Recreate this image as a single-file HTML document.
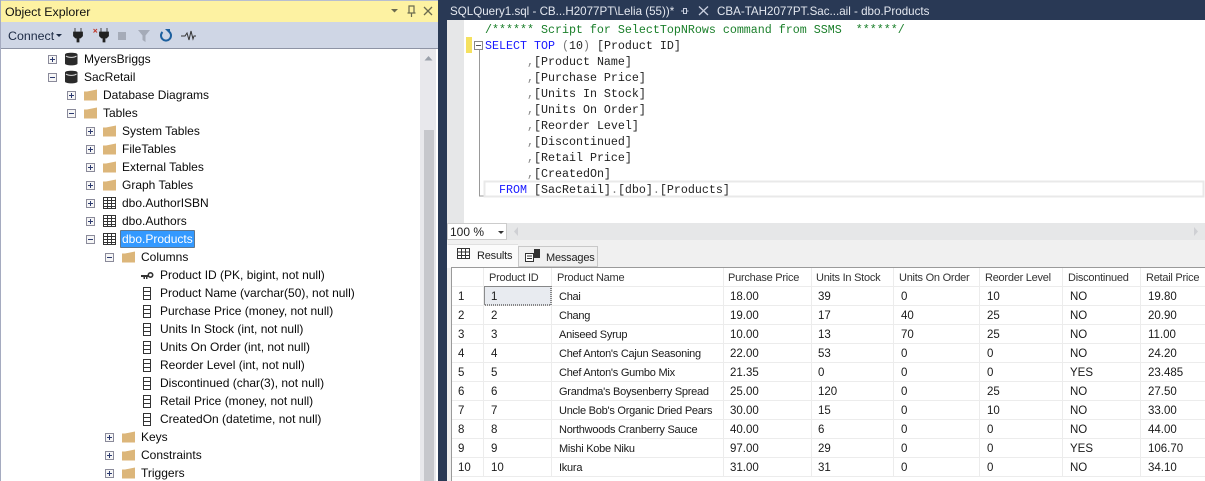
<!DOCTYPE html>
<html><head><meta charset="utf-8"><style>
html,body{margin:0;padding:0;background:#fff;width:1205px;height:481px;overflow:hidden}
svg{display:block}
text{font-family:"Liberation Sans",sans-serif;font-size:12px;fill:#111;white-space:pre}
.t text{font-size:12px;fill:#0a0a0a}
.m text{font-family:"Liberation Mono",monospace;font-size:11.67px;fill:#222}
.g text{font-size:11.5px;fill:#1a1a1a}
.g text.n{font-size:11px;letter-spacing:-.25px}
.h text{font-size:11px;letter-spacing:-.25px;fill:#333}
.tab{font-size:11.6px;fill:#e4e8f0}
.rt{font-size:11px;letter-spacing:-.2px;fill:#222}
</style></head><body>
<svg width="1205" height="481" viewBox="0 0 1205 481" xmlns="http://www.w3.org/2000/svg">
<defs>
<g id="plus"><rect x="0.5" y="0.5" width="8" height="8" fill="#f6f6f6" stroke="#8a8a9a"/><path d="M2 4.5h5M4.5 2v5" stroke="#2c3a70"/></g>
<g id="minus"><rect x="0.5" y="0.5" width="8" height="8" fill="#f6f6f6" stroke="#8a8a9a"/><path d="M2 4.5h5" stroke="#2c3a70"/></g>
<g id="folder"><path d="M0 2.500L3 2.500 L13 0.500V11.500H0z" fill="#dcb67a"/></g>
<g id="db"><path d="M0 2.500C0 .2 12.500 .2 12.500 2.500V11.500C12.500 14 0 14 0 11.500z" fill="#2a2a2a"/><path d="M1 4C3 5.800 9.500 5.800 11.500 4" stroke="#e0e0e0" fill="none"/></g>
<g id="tbl"><rect x="0.5" y="0.5" width="12" height="11" fill="#fff" stroke="#333"/><path d="M0 3.500h13M0 6.500h13M0 9.500h13M4.500 0v12M8.500 0v12" stroke="#333"/></g>
<g id="col"><rect x="0.5" y="0.5" width="7" height="12" fill="#fff" stroke="#333"/><path d="M0 4.500h8M0 8.500h8" stroke="#333"/></g>
</defs>

<!-- left panel -->
<rect width="440" height="481" fill="#fff"/>
<rect x="0" y="0" width="438" height="1" fill="#b8bfd0"/>
<rect x="0" y="0" width="1" height="481" fill="#a5abc0"/>
<rect x="1" y="1" width="437" height="21" fill="#fdf2a2"/>
<text x="5" y="16" style="font-size:12.400px">Object Explorer</text>
<path d="M391 9h7l-3.500 3.500z" fill="#6b6b4f"/>
<path d="M409 6h5v7h-5zM411.500 13v4M407.500 13h8" fill="none" stroke="#6b6b4f" stroke-width="1.200"/>
<path d="M424 7l8 8M432 7l-8 8" stroke="#6b6b4f" stroke-width="1.300"/>
<rect x="1" y="22" width="437" height="26" fill="#cfd6e5"/>
<rect x="1" y="48" width="437" height="1" fill="#8e94a5"/>
<text x="8" y="40" style="font-size:12.400px;fill:#1c2a44">Connect</text>
<path d="M56 34h6l-3 3z" fill="#1c2a44"/>
<path d="M75 28v4M81 28v4M73.500 32h9v4l-2 2h-1.500v4h-2v-4H75.500l-2-2z" fill="#222" stroke="#222" stroke-width=".8"/>
<path d="M93.500 29l3.500 3.500M97 29l-3.500 3.500" stroke="#c0392b" stroke-width="1"/>
<path d="M101 28v4M107 28v4M99.500 32h9v4l-2 2H105v4h-2v-4h-1.500l-2-2z" fill="#222" stroke="#222" stroke-width=".8"/>
<rect x="118" y="32" width="8" height="8" fill="#a5abb8"/>
<path d="M138 30h12l-4.500 5.500v6.500l-3-2v-4.500z" fill="#a5abb8"/>
<path d="M169.500 32a5 5 0 1 1-7 0" fill="none" stroke="#1c5f9e" stroke-width="2"/>
<path d="M165 29h5v5z" fill="#1c5f9e"/>
<path d="M181 36h4l2-3 2 7 2-9 2 8 1-3h2" fill="none" stroke="#333" stroke-width="1"/>

<!-- scrollbar -->
<rect x="420" y="49" width="16" height="432" fill="#e8e8ec"/>
<rect x="424" y="130" width="10" height="351" fill="#c6c7cc"/>
<path d="M424.500 60.500l4-4.500 4 4.500z" fill="#9aa0aa"/>

<!-- tree -->
<g class="t">
<use href="#plus" x="48" y="55"/><use href="#db" x="65" y="52"/><text x="84" y="63">MyersBriggs</text>
<use href="#minus" x="48" y="73"/><use href="#db" x="65" y="70"/><text x="84" y="81">SacRetail</text>
<use href="#plus" x="67" y="91"/><use href="#folder" x="84" y="89"/><text x="103" y="99">Database Diagrams</text>
<use href="#minus" x="67" y="109"/><use href="#folder" x="84" y="107"/><text x="103" y="117">Tables</text>
<use href="#plus" x="86" y="127"/><use href="#folder" x="103" y="125"/><text x="122" y="135">System Tables</text>
<use href="#plus" x="86" y="145"/><use href="#folder" x="103" y="143"/><text x="122" y="153">FileTables</text>
<use href="#plus" x="86" y="163"/><use href="#folder" x="103" y="161"/><text x="122" y="171">External Tables</text>
<use href="#plus" x="86" y="181"/><use href="#folder" x="103" y="179"/><text x="122" y="189">Graph Tables</text>
<use href="#plus" x="86" y="199"/><use href="#tbl" x="103" y="197"/><text x="122" y="207">dbo.AuthorISBN</text>
<use href="#plus" x="86" y="217"/><use href="#tbl" x="103" y="215"/><text x="122" y="225">dbo.Authors</text>
<use href="#minus" x="86" y="235"/><use href="#tbl" x="103" y="233"/>
<rect x="120.500" y="230.500" width="74" height="17" fill="#3399ff" stroke="#222" stroke-dasharray="1 1"/>
<text x="122" y="243" style="fill:#fff">dbo.Products</text>
<use href="#minus" x="105" y="253"/><use href="#folder" x="122" y="251"/><text x="141" y="261">Columns</text>
<path d="M141 275h7.500v2h-1v2h-1.500v-2h-1v2h-1.500v-2H141z" fill="#333"/><circle cx="150.500" cy="275" r="2.200" fill="none" stroke="#333" stroke-width="1.600"/>
<text x="160" y="279">Product ID (PK, bigint, not null)</text>
<use href="#col" x="143" y="287"/><text x="160" y="297">Product Name (varchar(50), not null)</text>
<use href="#col" x="143" y="305"/><text x="160" y="315">Purchase Price (money, not null)</text>
<use href="#col" x="143" y="323"/><text x="160" y="333">Units In Stock (int, not null)</text>
<use href="#col" x="143" y="341"/><text x="160" y="351">Units On Order (int, not null)</text>
<use href="#col" x="143" y="359"/><text x="160" y="369">Reorder Level (int, not null)</text>
<use href="#col" x="143" y="377"/><text x="160" y="387">Discontinued (char(3), not null)</text>
<use href="#col" x="143" y="395"/><text x="160" y="405">Retail Price (money, not null)</text>
<use href="#col" x="143" y="413"/><text x="160" y="423">CreatedOn (datetime, not null)</text>
<use href="#plus" x="105" y="433"/><use href="#folder" x="122" y="431"/><text x="141" y="441">Keys</text>
<use href="#plus" x="105" y="451"/><use href="#folder" x="122" y="449"/><text x="141" y="459">Constraints</text>
<use href="#plus" x="105" y="469"/><use href="#folder" x="122" y="467"/><text x="141" y="477">Triggers</text>
</g>

<!-- divider + tab bar -->
<rect x="438" y="0" width="9" height="481" fill="#293955"/>
<rect x="438" y="0" width="767" height="20" fill="#293955"/>
<text x="450" y="15" class="tab">SQLQuery1.sql - CB...H2077PT\Lelia (55))*</text>
<path d="M681 11h2M683.500 8.500h3v5h-3zM683.500 8v6M686.500 11h2" stroke="#c8cede" stroke-width="1" fill="none"/>
<path d="M699 6.500l9 8.500M708 6.500l-9 8.500" stroke="#c8cede" stroke-width="1.300"/>
<text x="717" y="15" class="tab">CBA-TAH2077PT.Sac...ail - dbo.Products</text>

<!-- editor -->
<rect x="447" y="20" width="758" height="204" fill="#fff"/>
<rect x="447" y="20" width="17" height="204" fill="#e6e7e8"/>
<rect x="466" y="37" width="6" height="16" fill="#f5e15f"/>
<rect x="474.500" y="41.500" width="8" height="8" fill="#fff" stroke="#888"/>
<path d="M476 45.500h5" stroke="#555"/>
<path d="M479.500 50V196h4" fill="none" stroke="#999"/>
<rect x="484.500" y="181.500" width="719" height="15" fill="none" stroke="#e9e9e9" stroke-width="2"/>
<g class="m">
<text x="485" y="33" style="fill:#1a7f2a">/****** Script for SelectTopNRows command from SSMS  ******/</text>
<text x="485" y="49"><tspan style="fill:#1a1aff">SELECT TOP</tspan> <tspan style="fill:#777">(</tspan>10<tspan style="fill:#777">)</tspan> [Product ID]</text>
<text x="485" y="65">      <tspan style="fill:#888">,</tspan>[Product Name]</text>
<text x="485" y="81">      <tspan style="fill:#888">,</tspan>[Purchase Price]</text>
<text x="485" y="97">      <tspan style="fill:#888">,</tspan>[Units In Stock]</text>
<text x="485" y="113">      <tspan style="fill:#888">,</tspan>[Units On Order]</text>
<text x="485" y="129">      <tspan style="fill:#888">,</tspan>[Reorder Level]</text>
<text x="485" y="145">      <tspan style="fill:#888">,</tspan>[Discontinued]</text>
<text x="485" y="161">      <tspan style="fill:#888">,</tspan>[Retail Price]</text>
<text x="485" y="177">      <tspan style="fill:#888">,</tspan>[CreatedOn]</text>
<text x="485" y="193">  <tspan style="fill:#1a1aff">FROM</tspan> [SacRetail]<tspan style="fill:#888">.</tspan>[dbo]<tspan style="fill:#888">.</tspan>[Products]</text>
</g>

<!-- zoom bar -->
<rect x="447" y="223" width="758" height="17" fill="#e6e7e8"/>
<rect x="447.500" y="223.500" width="59" height="16" fill="#fff" stroke="#ccc"/>
<text x="450" y="236" style="fill:#222">100 %</text>
<path d="M498 231h6l-3 3z" fill="#333"/>
<path d="M518 227v9l-4-4.500z" fill="#cfd0d4"/>
<path d="M1194 227v9l4-4.500z" fill="#cfd0d4"/>

<!-- results tabs -->
<rect x="447" y="240" width="758" height="241" fill="#f0f0f0"/>
<rect x="447" y="244" width="71" height="24" fill="#fbfbfb"/>
<path d="M447.500 244.500H518" stroke="#e0e0e0"/>
<rect x="518.500" y="246.500" width="79" height="20" fill="#f0f0f0" stroke="#c8c8c8"/>
<rect x="457.500" y="248.500" width="12" height="10" fill="#fff" stroke="#333"/>
<path d="M457 252h13M457 255.500h13M461.500 249v10M465.500 249v10" stroke="#333"/>
<text x="477" y="259" class="rt">Results</text>
<path d="M525.500 253.500h8v8h-8zM527 256h5M527 258.500h5" fill="#fff" stroke="#333"/>
<rect x="534" y="249" width="6" height="9" fill="#333"/>
<text x="546" y="261" class="rt">Messages</text>

<!-- grid -->
<rect x="451" y="267" width="754" height="214" fill="#fff"/>
<path d="M451 267.500H1205" stroke="#9a9a9a"/>
<path d="M451.500 267V481" stroke="#9a9a9a"/>
<path d="M483.500 268V477M551.500 268V477M723.500 268V477M811.500 268V477M893.500 268V477M979.500 268V477M1062.500 268V477M1140.500 268V477" stroke="#ececec"/>
<path d="M452 286.500H1205M452 305.500H1205M452 324.500H1205M452 343.500H1205M452 362.500H1205M452 381.500H1205M452 400.500H1205M452 419.500H1205M452 438.500H1205M452 457.500H1205M452 476.500H1205" stroke="#ececec"/>
<rect x="484.500" y="286.500" width="66.500" height="18.500" fill="#e8ebf0" stroke="#222" stroke-dasharray="1 1"/>
<g class="h">
<text x="489" y="281">Product ID</text><text x="557" y="281">Product Name</text><text x="728" y="281">Purchase Price</text><text x="816" y="281">Units In Stock</text><text x="899" y="281">Units On Order</text><text x="985" y="281">Reorder Level</text><text x="1068" y="281">Discontinued</text><text x="1146" y="281">Retail Price</text>
</g>
<g class="g">
<text x="458" y="300">1</text><text x="491" y="300">1</text><text class="n" x="559" y="300">Chai</text><text x="730" y="300">18.00</text><text x="818" y="300">39</text><text x="901" y="300">0</text><text x="987" y="300">10</text><text x="1070" y="300">NO</text><text x="1148" y="300">19.80</text>
<text x="458" y="319">2</text><text x="491" y="319">2</text><text class="n" x="559" y="319">Chang</text><text x="730" y="319">19.00</text><text x="818" y="319">17</text><text x="901" y="319">40</text><text x="987" y="319">25</text><text x="1070" y="319">NO</text><text x="1148" y="319">20.90</text>
<text x="458" y="338">3</text><text x="491" y="338">3</text><text class="n" x="559" y="338">Aniseed Syrup</text><text x="730" y="338">10.00</text><text x="818" y="338">13</text><text x="901" y="338">70</text><text x="987" y="338">25</text><text x="1070" y="338">NO</text><text x="1148" y="338">11.00</text>
<text x="458" y="357">4</text><text x="491" y="357">4</text><text class="n" x="559" y="357">Chef Anton's Cajun Seasoning</text><text x="730" y="357">22.00</text><text x="818" y="357">53</text><text x="901" y="357">0</text><text x="987" y="357">0</text><text x="1070" y="357">NO</text><text x="1148" y="357">24.20</text>
<text x="458" y="376">5</text><text x="491" y="376">5</text><text class="n" x="559" y="376">Chef Anton's Gumbo Mix</text><text x="730" y="376">21.35</text><text x="818" y="376">0</text><text x="901" y="376">0</text><text x="987" y="376">0</text><text x="1070" y="376">YES</text><text x="1148" y="376">23.485</text>
<text x="458" y="395">6</text><text x="491" y="395">6</text><text class="n" x="559" y="395">Grandma's Boysenberry Spread</text><text x="730" y="395">25.00</text><text x="818" y="395">120</text><text x="901" y="395">0</text><text x="987" y="395">25</text><text x="1070" y="395">NO</text><text x="1148" y="395">27.50</text>
<text x="458" y="414">7</text><text x="491" y="414">7</text><text class="n" x="559" y="414">Uncle Bob's Organic Dried Pears</text><text x="730" y="414">30.00</text><text x="818" y="414">15</text><text x="901" y="414">0</text><text x="987" y="414">10</text><text x="1070" y="414">NO</text><text x="1148" y="414">33.00</text>
<text x="458" y="433">8</text><text x="491" y="433">8</text><text class="n" x="559" y="433">Northwoods Cranberry Sauce</text><text x="730" y="433">40.00</text><text x="818" y="433">6</text><text x="901" y="433">0</text><text x="987" y="433">0</text><text x="1070" y="433">NO</text><text x="1148" y="433">44.00</text>
<text x="458" y="452">9</text><text x="491" y="452">9</text><text class="n" x="559" y="452">Mishi Kobe Niku</text><text x="730" y="452">97.00</text><text x="818" y="452">29</text><text x="901" y="452">0</text><text x="987" y="452">0</text><text x="1070" y="452">YES</text><text x="1148" y="452">106.70</text>
<text x="458" y="471">10</text><text x="491" y="471">10</text><text class="n" x="559" y="471">Ikura</text><text x="730" y="471">31.00</text><text x="818" y="471">31</text><text x="901" y="471">0</text><text x="987" y="471">0</text><text x="1070" y="471">NO</text><text x="1148" y="471">34.10</text>
</g>
</svg>
</body></html>
